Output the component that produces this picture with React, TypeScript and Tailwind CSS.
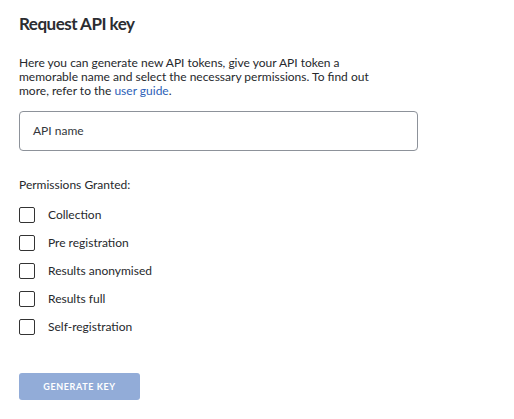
import React from "react";

const perms = ["Collection", "Pre registration", "Results anonymised", "Results full", "Self-registration"];

export default function App() {
  return (
    <div className="w-[514px] h-[419px] bg-white pl-[19px] pt-[12px] text-[#2b2d31]" style={{ fontFamily: "Lato, 'Liberation Sans', sans-serif" }}>
      <h1 className="text-[17px] font-bold leading-[24px] tracking-[-0.5px] text-[#2b2d31]">Request API key</h1>
      <p className="mt-[20px] text-[12px] leading-[14px] whitespace-nowrap text-[#26282c]">
        Here you can generate new API tokens, give your API token a<br />
        memorable name and select the necessary permissions. To find out<br />
        more, refer to the <a className="text-[#2d5fb8]">user guide</a>.
      </p>
      <div className="mt-[13px] w-[399px] h-[40px] border border-[#8d929a] rounded-[4px] flex items-center pl-[13px] text-[12px] text-[#33363b]">
        API name
      </div>
      <div className="mt-[27px] text-[12px] leading-[14px] text-[#26282c]">Permissions Granted:</div>
      <div className="mt-[15px] flex flex-col gap-[12px]">
        {perms.map((p) => (
          <label key={p} className="flex items-center h-[16px] gap-[13px] text-[12px] text-[#26282c]">
            <span className="w-[16px] h-[16px] border-[1.5px] border-[#333] rounded-[2px] shrink-0" />
            {p}
          </label>
        ))}
      </div>
      <button className="mt-[38px] w-[121px] h-[27px] rounded-[3px] bg-[#92acd8] text-white text-[9px] font-bold tracking-[0.6px] uppercase">
        Generate Key
      </button>
    </div>
  );
}
